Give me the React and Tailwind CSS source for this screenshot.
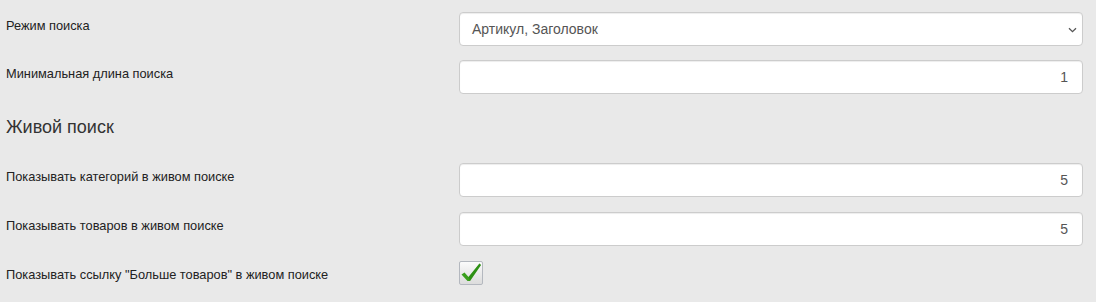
const font = { fontFamily: '"Liberation Sans", Arial, sans-serif' };

const Label = ({ children }) => (
    <div className="w-[459px] shrink-0 pl-[6px] pt-[6px] text-[12.8px] leading-[15px] text-[#222]">
        {children}
    </div>
)

const NumberInput = ({ value }) => (
    <div className="flex h-[34px] w-[624px] items-center justify-end rounded-[4px] border border-[#ccc] bg-white pr-[14px] text-[14px] text-[#555] shadow-[inset_0_1px_1px_rgba(0,0,0,0.075)]">
        {value}
    </div>
)

const Select = ({ value }) => (
    <div className="flex h-[34px] w-[624px] items-center justify-between rounded-[4px] border border-[#ccc] bg-white pl-[12px] pr-[5px] text-[14px] text-[#555] shadow-[inset_0_1px_1px_rgba(0,0,0,0.075)]">
        <span>{value}</span>
        <svg width="9" height="6" viewBox="0 0 9 6" className="mt-[1px]">
            <path d="M1 1.2 L4.5 4.6 L8 1.2" fill="none" stroke="#555" strokeWidth="1.3" />
        </svg>
    </div>
)

const Checkbox = () => (
    <div className="relative h-[24px] w-[24px] rounded-[2px] border border-[#b4b8bf] bg-gradient-to-b from-[#fbfbfb] to-[#dcdcdc]">
        <svg width="24" height="24" viewBox="0 0 24 24" className="absolute left-[-1px] top-[-1px]">
            <path d="M2.5 13.5 L5.5 11.5 L9.5 16 L20.5 2.5 L22 4 L11 20 L8.5 20 Z" fill="#3a9f1c" />
            <path d="M9.5 16 L20.5 2.5 L22 4 L11 20 Z" fill="#1f7e0c" opacity="0.45" />
        </svg>
    </div>
)

const Row = ({ label, children, className = '' }) => (
    <div className={`flex ${className}`}>
        <Label>{label}</Label>
        {children}
    </div>
)

export default function App() {
    return (
        <div className="h-[302px] w-[1096px] bg-[#e9e9e9] pt-[12px]" style={font}>
            <Row label="Режим поиска" className="mb-[14px]">
                <Select value="Артикул, Заголовок" />
            </Row>
            <Row label="Минимальная длина поиска">
                <NumberInput value="1" />
            </Row>
            <h3 className="mt-[23px] mb-[26px] pl-[6px] text-[18px] leading-[20px] text-[#333]">Живой поиск</h3>
            <Row label="Показывать категорий в живом поиске" className="mb-[15px]">
                <NumberInput value="5" />
            </Row>
            <Row label="Показывать товаров в живом поиске" className="mb-[15px]">
                <NumberInput value="5" />
            </Row>
            <Row label={'Показывать ссылку "Больше товаров" в живом поиске'}>
                <Checkbox />
            </Row>
        </div>
    )
}
